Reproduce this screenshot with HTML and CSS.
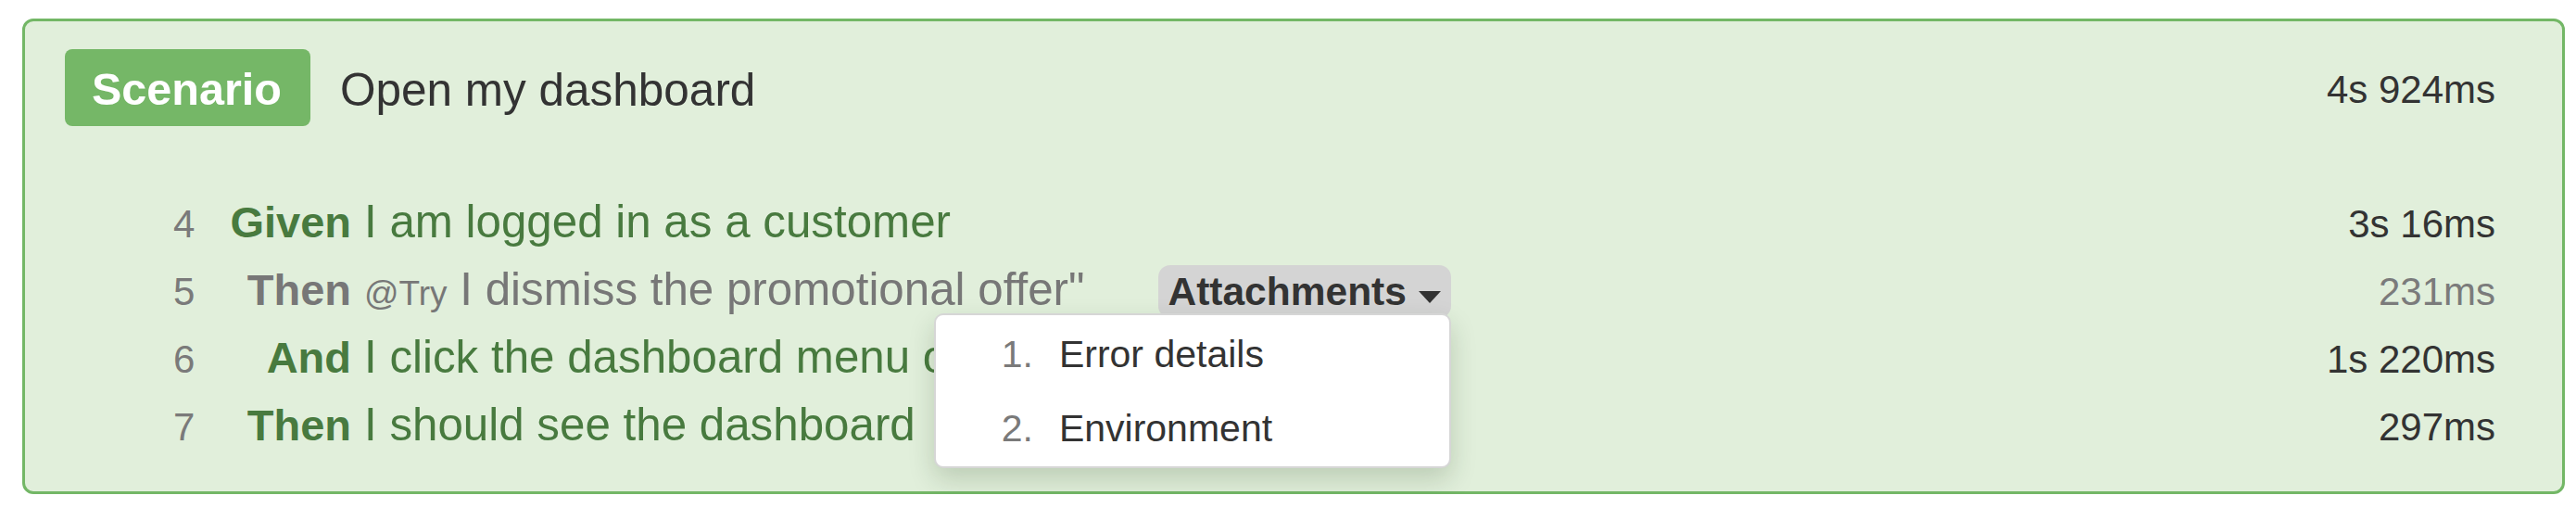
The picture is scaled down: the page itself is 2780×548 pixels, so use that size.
FILE: index.html
```html
<!DOCTYPE html>
<html lang="en">
<head>
<meta charset="utf-8">
<title>Scenario report</title>
<link rel="stylesheet" href="styles.css">
</head>
<body>
<div class="scenario">
  <div class="head">
    <span class="badge">Scenario</span>
    <span class="title">Open my dashboard</span>
    <span class="dur">4s 924ms</span>
  </div>
  <div class="steps">
    <div class="step">
      <span class="ln">4</span>
      <span class="kw">Given</span>
      <span class="txt">I am logged in as a customer</span>
      <span class="dur">3s 16ms</span>
    </div>
    <div class="step skipped">
      <span class="ln">5</span>
      <span class="kw">Then</span>
      <span class="txt"><span class="tag">@Try</span> I dismiss the promotional offer"<span class="attach"><span class="attach-btn">Attachments<span class="caret"></span></span><ol class="menu"><li><span class="num">1.</span><span class="item">Error details</span></li><li><span class="num">2.</span><span class="item">Environment</span></li></ol></span></span>
      <span class="dur">231ms</span>
    </div>
    <div class="step">
      <span class="ln">6</span>
      <span class="kw">And</span>
      <span class="txt">I click the dashboard menu option</span>
      <span class="dur">1s 220ms</span>
    </div>
    <div class="step">
      <span class="ln">7</span>
      <span class="kw">Then</span>
      <span class="txt">I should see the dashboard</span>
      <span class="dur">297ms</span>
    </div>
  </div>
</div>
</body>
</html>
```
FILE: styles.css
```css
html, body {
  margin: 0;
  padding: 0;
  background: #ffffff;
}
body {
  font-family: "Liberation Sans", Arial, Helvetica, sans-serif;
  color: #333333;
}
.scenario {
  margin: 20px 12px 0 24px;
  border: 3px solid #73b766;
  border-radius: 12px;
  background: #e1efdb;
  padding: 30px 72px 36px 43px;
}
.head {
  display: flex;
  align-items: center;
  height: 83px;
}
.badge {
  background: #75b767;
  color: #ffffff;
  font-weight: bold;
  font-size: 48.5px;
  line-height: 83px;
  padding: 2px 31px 0 29px;
  border-radius: 8px;
  height: 81px;
}
.title {
  margin-left: 32px;
  font-size: 49.5px;
  padding-top: 4px;
  color: #333333;
}
.head .dur {
  margin-left: auto;
  padding-top: 4px;
}
.dur {
  font-size: 42px;
  color: #333333;
}
.steps {
  margin-top: 66px;
}
.step {
  display: flex;
  align-items: baseline;
  line-height: 73px;
  height: 73px;
  color: #487a3f;
}
.ln {
  width: 40px;
  margin-left: 117px;
  font-size: 42px;
  color: #7a7a7a;
}
.kw {
  width: 152px;
  text-align: right;
  font-weight: bold;
  font-size: 47px;
}
.txt {
  margin-left: 14px;
  font-size: 49.3px;
  white-space: nowrap;
}
.step .dur {
  margin-left: auto;
}
.skipped {
  color: #777777;
}
.skipped .dur {
  color: #7b7b7b;
}
.tag {
  font-size: 37px;
}
.attach {
  position: relative;
  display: inline-block;
  margin-left: 80px;
}
.attach-btn {
  display: inline-block;
  background: #d4d4d4;
  border-radius: 13px;
  color: #333333;
  font-weight: bold;
  font-size: 42.5px;
  line-height: 57px;
  height: 57px;
  padding: 0 11px 0 10px;
}
.caret {
  display: inline-block;
  width: 0;
  height: 0;
  margin-left: 13px;
  border-top: 13px solid #333333;
  border-left: 12.5px solid transparent;
  border-right: 12.5px solid transparent;
  vertical-align: 2px;
}
.menu {
  position: absolute;
  right: 0;
  top: 63px;
  width: 558px;
  box-sizing: border-box;
  margin: 0;
  padding: 2px 0 1px;
  list-style: none;
  background: #ffffff;
  border: 2px solid rgba(0, 0, 0, 0.16);
  border-radius: 10px;
  box-shadow: 0 12px 28px rgba(20, 50, 10, 0.18);
  z-index: 2;
}
.menu li {
  display: flex;
  line-height: 80px;
  font-size: 41px;
  font-weight: normal;
  color: #333333;
  padding-left: 43px;
}
.menu .num {
  width: 62px;
  text-align: right;
  color: #7a7a7a;
}
.menu .item {
  margin-left: 28px;
}
```
